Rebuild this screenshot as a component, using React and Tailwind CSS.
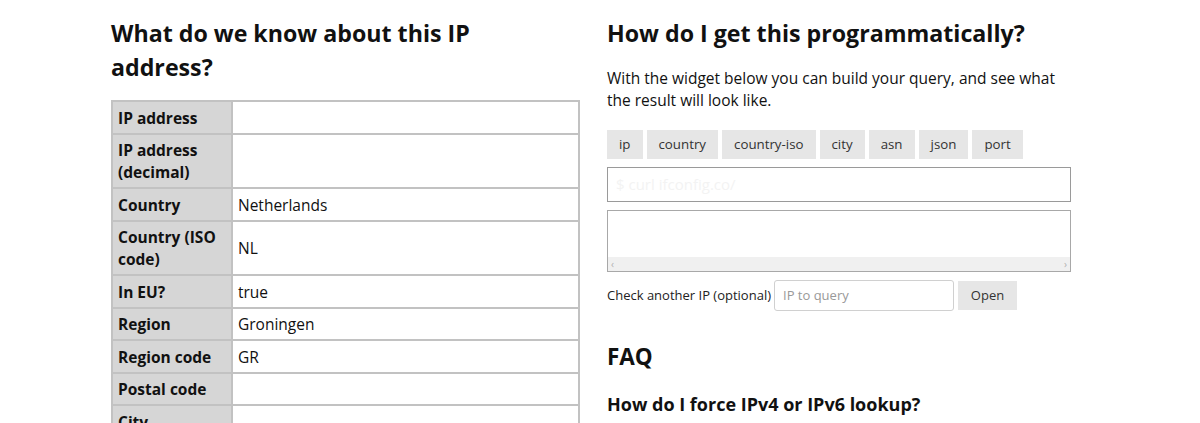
export default function App() {
  const rows = [
    ["IP address", ""],
    ["IP address (decimal)", ""],
    ["Country", "Netherlands"],
    ["Country (ISO code)", "NL"],
    ["In EU?", "true"],
    ["Region", "Groningen"],
    ["Region code", "GR"],
    ["Postal code", ""],
    ["City", ""],
  ];
  const tags = ["ip", "country", "country-iso", "city", "asn", "json", "port"];
  return (
    <div
      className="w-[1200px] h-[423px] overflow-hidden bg-white text-[#111]"
      style={{ fontFamily: '"Open Sans", "Liberation Sans", sans-serif' }}
    >
      <div className="flex pl-[111px] pt-[16px]">
        <div className="w-[469px] shrink-0">
          <h2 className="text-[23.2px] leading-[34px] font-bold pr-[40px]">
            What do we know about this IP address?
          </h2>
          <table className="mt-[16px] w-[469px] border-collapse text-[15.5px] leading-[22px]">
            <tbody>
              {rows.map(([k, v]) => (
                <tr key={k}>
                  <th className="w-[120px] border-2 border-[#c2c2c2] bg-[#d6d6d6] pl-[5px] pr-[4px] pt-[4.5px] pb-[4px] text-left align-middle font-bold">
                    {k}
                  </th>
                  <td className="border-2 border-[#c2c2c2] bg-white pl-[5px] pt-[4.5px] pb-[4px] align-middle">
                    {v}
                  </td>
                </tr>
              ))}
            </tbody>
          </table>
        </div>
        <div className="ml-[27px] w-[464px] shrink-0">
          <h2 className="text-[23.2px] leading-[34px] font-bold">
            How do I get this programmatically?
          </h2>
          <p className="mt-[17px] text-[15.5px] leading-[22px]">
            With the widget below you can build your query, and see what the result will look like.
          </p>
          <div className="mt-[19px] flex gap-[4px]">
            {tags.map((t) => (
              <div
                key={t}
                className="h-[29px] px-[12px] bg-[#e6e6e6] text-[13.3px] leading-[29px] text-[#333]"
              >
                {t}
              </div>
            ))}
          </div>
          <div className="mt-[8px] h-[35px] border border-[#9a9a9a] px-[8px] text-[15px] leading-[33px] text-[#f3f3f3]">
            $ curl ifconfig.co/
          </div>
          <div className="mt-[8px] h-[62px] border border-[#a8a8a8] flex flex-col">
            <div className="flex-1" />
            <div className="h-[14px] bg-[#f0f0f0] flex items-center justify-between px-[3px] text-[10px] leading-none text-[#b0b0b0]">
              <span>‹</span>
              <span>›</span>
            </div>
          </div>
          <div className="mt-[8px] flex items-center">
            <span className="text-[13px] text-[#222]">Check another IP (optional)</span>
            <div className="ml-[3px] w-[180px] h-[31px] border border-[#d0d0d0] rounded-[3px] px-[8px] text-[13px] leading-[29px] text-[#999]">
              IP to query
            </div>
            <div className="ml-[4px] w-[59px] h-[29px] bg-[#e6e6e6] text-center text-[13px] leading-[29px] text-[#333]">
              Open
            </div>
          </div>
          <h2 className="mt-[29px] text-[22.5px] leading-[34px] font-bold">FAQ</h2>
          <h3 className="mt-[17px] text-[18px] leading-[26px] font-bold">
            How do I force IPv4 or IPv6 lookup?
          </h3>
        </div>
      </div>
    </div>
  );
}
